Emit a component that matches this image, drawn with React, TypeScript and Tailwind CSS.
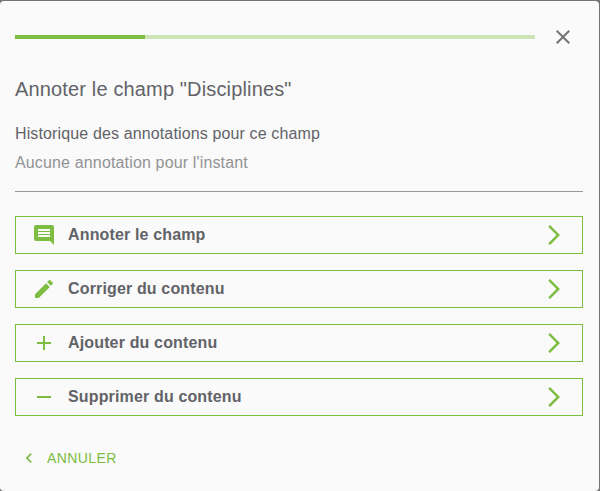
import type { IconType } from "react-icons";
import {
  MdAdd,
  MdArrowForwardIos,
  MdChevronLeft,
  MdClose,
  MdComment,
  MdEdit,
  MdRemove,
} from "react-icons/md";

interface Action {
  label: string;
  Icon: IconType;
}

const ACTIONS: Action[] = [
  { label: "Annoter le champ", Icon: MdComment },
  { label: "Corriger du contenu", Icon: MdEdit },
  { label: "Ajouter du contenu", Icon: MdAdd },
  { label: "Supprimer du contenu", Icon: MdRemove },
];

const PROGRESS = 25;

function ActionButton({ label, Icon }: Action) {
  return (
    <button
      type="button"
      className="flex h-[38px] w-full items-center border border-[#7dbd42] px-4 text-left"
    >
      <Icon className="size-6 shrink-0 text-[#7dbd42]" />
      <span className="ml-3 grow text-base leading-6 font-bold tracking-[0.15px]">{label}</span>
      <MdArrowForwardIos className="size-6 shrink-0 text-[#7dbd42]" />
    </button>
  );
}

export default function App() {
  return (
    <div className="h-screen bg-[#757575] pt-px pr-px font-['Liberation_Sans',Arial,sans-serif] text-[#626368]">
      <div className="flex h-full flex-col rounded bg-[#fafafa] pr-4 pl-[15px]">
        {/* Progress + close */}
        <header className="mt-6 flex items-center">
          <div className="h-1 w-[520px] bg-[#cce5b5]">
            <div className="h-full bg-[#7dbd42]" style={{ width: `${PROGRESS}%` }} />
          </div>
          <button type="button" aria-label="Fermer" className="ml-4 text-[#757575]">
            <MdClose className="size-6" />
          </button>
        </header>

        <h2 className="mt-6 text-xl leading-8 tracking-[0.15px]">Annoter le champ "Disciplines"</h2>
        <p className="mt-[17px] text-base leading-6 tracking-[0.13px]">Historique des annotations pour ce champ</p>
        <p className="mt-[5px] text-base leading-6 tracking-[0.15px] text-[#929295]">Aucune annotation pour l'instant</p>
        <hr className="mt-4 border-t border-[#98999c]" />

        <div className="mt-6 flex flex-col gap-4">
          {ACTIONS.map(a => (
            <ActionButton key={a.label} {...a} />
          ))}
        </div>

        <button
          type="button"
          className="mt-[30px] ml-1 flex items-center self-start text-sm leading-6 tracking-[0.4px] text-[#7dbd42]"
        >
          <MdChevronLeft className="mr-2 size-5" />
          ANNULER
        </button>
      </div>
    </div>
  );
}
